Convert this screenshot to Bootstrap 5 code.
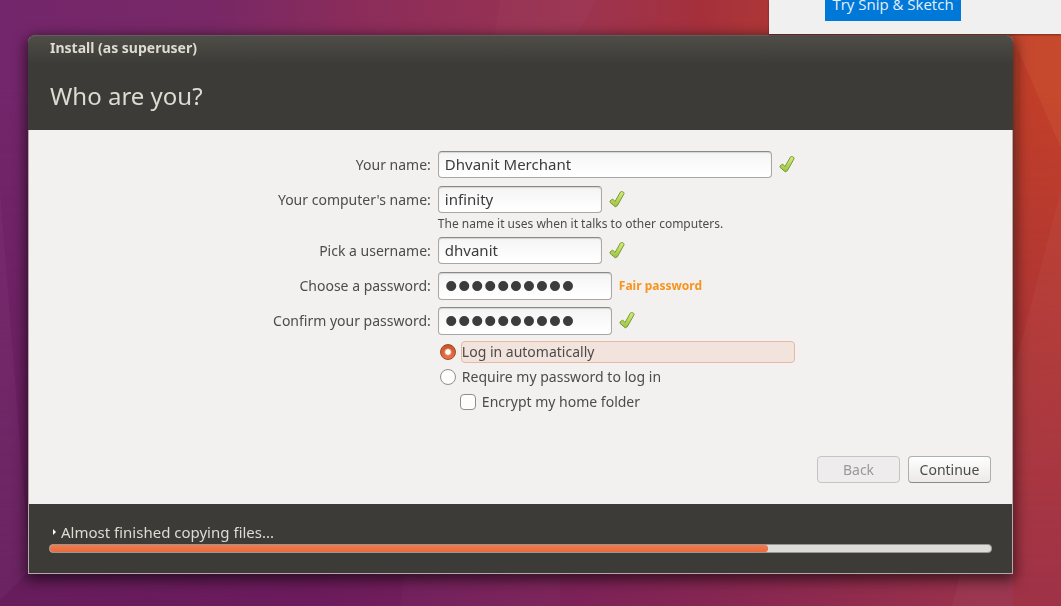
<!DOCTYPE html>
<html lang="en">
<head>
<meta charset="utf-8">
<meta name="viewport" content="width=device-width, initial-scale=1">
<title>Install (as superuser)</title>
<link href="https://cdn.jsdelivr.net/npm/bootstrap@5.3.0/dist/css/bootstrap.min.css" rel="stylesheet">
<style>
  body {
    font-family: "Noto Sans", "Open Sans", sans-serif;
    font-size: 14px;
    line-height: 20px;
    color: #4c4c4c;
    background: linear-gradient(90deg, #74266c 0%, #782866 20%, #8b2c5a 34%, #9c3450 55%, #a5303c 66%, #b03a34 75%, #c84a2d 100%);
  }
  .wallpaper { z-index: -1; }
  .wallpaper-floor {
    background: linear-gradient(90deg, #671d5c 0%, #6b1b5c 30%, #7c2258 55%, #8b2950 75%, #98314c 92%, #96314d 100%);
    -webkit-mask-image: linear-gradient(#0000 15%, #000 100%);
    mask-image: linear-gradient(#0000 15%, #000 100%);
  }
  .desktop { padding: 35px 48px 32px 28px; }
  .snip-panel {
    width: 292px; height: 34px; background: #f0f0f0; z-index: 2;
    box-shadow: 0 1px 2px #0006; padding-left: 56px;
  }
  .snip-btn {
    width: 136px; height: 32px; margin-top: -11px; background: #0078d7; color: #e4f1fc; border: 0;
    font: 15px/20px "Open Sans", "Noto Sans", sans-serif; padding: 0 0 2px; white-space: nowrap;
  }
  .installer {
    border: 1px solid #b5aaa9; border-top-color: #5f5e58; border-radius: 7px 7px 0 0;
    box-shadow: 0 4px 14px 2px #0009;
    background: #f2f1f0;
  }
  .installer-head {
    margin: 0 -1px; padding: 0 22px; height: 94px;
    border-radius: 6px 6px 0 0;
    background: linear-gradient(#4e4d47, #3c3b37 28px);
    color: #dfdbd2;
  }
  .window-title { font-size: 14px; line-height: 24px; font-weight: 700; }
  .page-title { font-size: 24px; line-height: 32px; font-weight: 400; margin-top: 20px; }
  .form-area { padding: 21px 21px 21px 0; }
  .field-label { flex: 0 0 42.5%; padding-right: 7px; text-align: right; }
  .field-row { margin-bottom: 8px; }
  .secret-row { margin-bottom: 7px; }
  .entry {
    height: 27px; padding: 0 6px 2px; border: 1px solid #a9a7a3; border-top-color: #8a8986; border-radius: 4px;
    font-size: 15px; color: #3c3c3c;
    background: linear-gradient(#f4f4f4, #fff 90%); box-shadow: inset 0 1px 1px #0002;
  }
  .entry-wide { width: 334px; }
  .entry-mid { width: 164px; }
  .entry-secret { width: 174px; height: 28px; padding: 0 6px; font: 37px/26px "Liberation Sans", sans-serif; }
  .tick { width: 16px; height: 18px; margin-left: 7px; }
  .hint { font-size: 12px; line-height: 22px; margin-bottom: 2px; }
  .strength { font-size: 12px; font-weight: 700; color: #f7941d; margin-left: 7px; }
  .choices { gap: 3px; padding: 6px 0 0 2px; }
  .choice { height: 22px; }
  .choice-nested { padding-left: 20px; }
  .choice label { line-height: 20px; border: 1px solid transparent; border-radius: 4px; margin-left: 5px; }
  .choice .focused { width: 334px; background: #f2e3dd; border-color: #e9b8a2; }
  .choice .form-check-input { width: 16px; height: 16px; border: 1px solid #8f8e8b; background-color: #fdfdfd; margin: 0; }
  .choice .form-check-input[type=checkbox] { border-radius: 4px; }
  .choice .form-check-input:checked {
    border-color: #a94521;
    background: radial-gradient(circle, #fff 2px, #fff0 4px), linear-gradient(#c4542c, #e8764b);
  }
  .nav-btn {
    width: 83px; height: 27px; padding: 0; font-size: 14px; line-height: 20px; border-radius: 4px; color: #4c4c4c;
    border: 1px solid #b0aeaa; border-bottom-color: #8c8a87; background: linear-gradient(#fefefe, #ebeae9);
  }
  .nav-btn:disabled { color: #999; border-color: #c5c3c3; background: #eeecec; opacity: 1; }
  .installer-foot { background: #3c3b37; color: #dfdbd2; padding: 18px 20px 20px; }
  .details-toggle { background: none; border: 0; color: inherit; padding: 0 0 1px; font-size: 15px; line-height: 21px; }
  .details-toggle svg { width: 12px; height: 9px; }
  .copy-progress { height: 9px; border: 1px solid #99968f; border-radius: 4px; background: #dcdcdb; }
  .copy-progress .progress-bar { background: linear-gradient(#ef7c51, #e96a3b); border-radius: 0 3px 3px 0; }
</style>
</head>
<body>
<svg class="wallpaper position-fixed top-0 start-0 w-100 h-100" viewBox="0 0 1061 606" preserveAspectRatio="none" aria-hidden="true">
  <foreignObject width="1061" height="606"><div class="wallpaper-floor w-100 h-100"></div></foreignObject>
  <path d="M597 0H500L400 606H560V60Z" fill="#fff" opacity=".02"/>
  <path d="M1018 50 1061 148V606H1013Z" fill="#b01818" opacity=".2"/>
  <path d="M1061 190 952 606H1061Z" fill="#fff" opacity=".03"/>
  <path d="M0 190V600L30 570Z" fill="#fff" opacity=".03"/>
</svg>

<aside class="snip-panel position-absolute top-0 end-0 overflow-hidden" aria-label="Snip &amp; Sketch">
  <button type="button" class="snip-btn d-block">Try Snip &amp; Sketch</button>
</aside>

<div class="desktop min-vh-100 d-flex">
  <div class="installer flex-grow-1 d-flex flex-column">
    <header class="installer-head">
      <div class="window-title">Install (as superuser)</div>
      <h1 class="page-title mb-0">Who are you?</h1>
    </header>

    <form class="form-area flex-grow-1 d-flex flex-column">
      <div class="field-row d-flex align-items-center">
        <label class="field-label" for="name">Your name:</label>
        <input id="name" class="entry entry-wide" type="text" value="Dhvanit Merchant">
        <svg class="tick" viewBox="0 0 16 18" role="img" aria-label="OK"><defs><linearGradient id="leaf" x1="0" y1="0" x2="0" y2="1"><stop offset="0" stop-color="#d5ec7c"/><stop offset="1" stop-color="#9ac43c"/></linearGradient><path id="tick" d="M1 10 3.600 8 6 10.500 11.500 .900Q12.300.300 13.300.600L14.800 1.500Q15.300 2.100 15 2.800L8.300 14.800 6.200 15.800 1 11.300Z" fill="url(#leaf)" stroke="#79983b" stroke-width="1" stroke-linejoin="round"/></defs><use href="#tick"/></svg>
      </div>
      <div class="d-flex align-items-center">
        <label class="field-label" for="host">Your computer's name:</label>
        <input id="host" class="entry entry-mid" type="text" value="infinity" aria-describedby="host-hint">
        <svg class="tick" viewBox="0 0 16 18" role="img" aria-label="OK"><use href="#tick"/></svg>
      </div>
      <div class="d-flex">
        <div class="field-label"></div>
        <div id="host-hint" class="hint">The name it uses when it talks to other computers.</div>
      </div>
      <div class="field-row d-flex align-items-center">
        <label class="field-label" for="user">Pick a username:</label>
        <input id="user" class="entry entry-mid" type="text" value="dhvanit">
        <svg class="tick" viewBox="0 0 16 18" role="img" aria-label="OK"><use href="#tick"/></svg>
      </div>
      <div class="secret-row d-flex align-items-center">
        <label class="field-label" for="pw">Choose a password:</label>
        <input id="pw" class="entry entry-secret" type="password" value="dhvanit123">
        <span class="strength">Fair password</span>
      </div>
      <div class="d-flex align-items-center">
        <label class="field-label" for="pw2">Confirm your password:</label>
        <input id="pw2" class="entry entry-secret" type="password" value="dhvanit123">
        <svg class="tick" viewBox="0 0 16 18" role="img" aria-label="OK"><use href="#tick"/></svg>
      </div>
      <div class="d-flex">
        <div class="field-label"></div>
        <div class="choices d-flex flex-column">
          <div class="choice d-flex align-items-center">
            <input class="form-check-input" type="radio" name="login" id="auto" checked>
            <label class="focused" for="auto">Log in automatically</label>
          </div>
          <div class="choice d-flex align-items-center">
            <input class="form-check-input" type="radio" name="login" id="require">
            <label for="require">Require my password to log in</label>
          </div>
          <div class="choice choice-nested d-flex align-items-center">
            <input class="form-check-input" type="checkbox" id="encrypt">
            <label for="encrypt">Encrypt my home folder</label>
          </div>
        </div>
      </div>
      <div class="d-flex justify-content-end gap-2 mt-auto">
        <button type="button" class="nav-btn btn" disabled>Back</button>
        <button type="button" class="nav-btn btn">Continue</button>
      </div>
    </form>

    <footer class="installer-foot">
      <button type="button" class="details-toggle d-flex align-items-center"><svg viewBox="0 0 12 9" aria-hidden="true"><path d="M4 1 7 4 4 7Z" fill="#fff"/></svg>Almost finished copying files...</button>
      <div class="copy-progress progress" role="progressbar" aria-label="Copying files" aria-valuenow="76" aria-valuemin="0" aria-valuemax="100">
        <div class="progress-bar" style="width: 76.3%"></div>
      </div>
    </footer>
  </div>
</div>
<script src="https://cdn.jsdelivr.net/npm/bootstrap@5.3.0/dist/js/bootstrap.bundle.min.js"></script>
</body>
</html>
